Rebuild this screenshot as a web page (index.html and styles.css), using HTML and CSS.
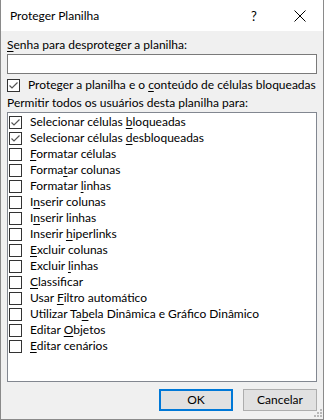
FILE: index.html
```html
<!DOCTYPE html>
<html lang="pt-BR">
<head>
  <meta charset="UTF-8">
  <title>Proteger Planilha</title>
  <link rel="stylesheet" href="styles.css">
</head>
<body>
  <div class="window">
    <div class="title-bar">
      <span class="title">Proteger Planilha</span>
      <span class="title-help">?</span>
      <span class="title-close">
        <svg width="12" height="12" viewBox="0 0 12 12"><path d="M0.5 0.5 L11.5 11.5 M11.5 0.5 L0.5 11.5" stroke="#000" stroke-width="1" fill="none"/></svg>
      </span>
    </div>

    <div class="content">
      <div class="label"><u>S</u>enha para desproteger a planilha:</div>
      <div class="input"></div>

      <div class="check-row protect">
        <span class="box checked"></span>
        <span>Proteger a planilha e o <u>c</u>onteúdo de células bloqueadas</span>
      </div>

      <div class="label allow">Permitir todos os usuários desta planilha para:</div>

      <div class="list">
        <div class="check-row"><span class="box checked"></span><span>Selecionar células <u>b</u>loqueadas</span></div>
        <div class="check-row"><span class="box checked"></span><span>Selecionar células <u>d</u>esbloqueadas</span></div>
        <div class="check-row"><span class="box"></span><span><u>F</u>ormatar células</span></div>
        <div class="check-row"><span class="box"></span><span>Forma<u>t</u>ar colunas</span></div>
        <div class="check-row"><span class="box"></span><span>Formatar <u>l</u>inhas</span></div>
        <div class="check-row"><span class="box"></span><span>I<u>n</u>serir colunas</span></div>
        <div class="check-row"><span class="box"></span><span>I<u>n</u>serir linhas</span></div>
        <div class="check-row"><span class="box"></span><span>Inserir <u>h</u>iperlinks</span></div>
        <div class="check-row"><span class="box"></span><span><u>E</u>xcluir colunas</span></div>
        <div class="check-row"><span class="box"></span><span>Excluir <u>l</u>inhas</span></div>
        <div class="check-row"><span class="box"></span><span><u>C</u>lassificar</span></div>
        <div class="check-row"><span class="box"></span><span>Usar <u>F</u>iltro automático</span></div>
        <div class="check-row"><span class="box"></span><span>Utilizar Ta<u>b</u>ela Dinâmica e Gráfico Dinâmico</span></div>
        <div class="check-row"><span class="box"></span><span>Editar <u>O</u>bjetos</span></div>
        <div class="check-row"><span class="box"></span><span><u>E</u>ditar cenários</span></div>
      </div>

      <div class="buttons">
        <span class="button default">OK</span>
        <span class="button">Cancelar</span>
      </div>
    </div>

    <svg class="grip" width="8" height="8" viewBox="0 0 8 8">
      <rect x="6" y="0" width="2" height="2" fill="#b8b8b8"/>
      <rect x="3" y="3" width="2" height="2" fill="#b8b8b8"/>
      <rect x="6" y="3" width="2" height="2" fill="#b8b8b8"/>
      <rect x="0" y="6" width="2" height="2" fill="#b8b8b8"/>
      <rect x="3" y="6" width="2" height="2" fill="#b8b8b8"/>
      <rect x="6" y="6" width="2" height="2" fill="#b8b8b8"/>
    </svg>
  </div>
</body>
</html>
```

FILE: styles.css
```css
html, body {
  margin: 0;
  padding: 0;
}
body {
  font-family: Lato, "Noto Sans", sans-serif;
  font-size: 12px;
  line-height: 16px;
  color: #000;
  background: #fff;
}
u {
  text-decoration-thickness: 1px;
  text-underline-offset: 2px;
}
.window {
  position: relative;
  box-sizing: border-box;
  width: 324px;
  height: 420px;
  border: 1px solid #8a8a8a;
  border-top: none;
  background: #f0f0f0;
  display: flex;
  flex-direction: column;
}
.title-bar {
  height: 31px;
  background: #fff;
  display: flex;
  align-items: center;
  padding-left: 9px;
}
.title {
  flex: 1;
}
.title-help {
  width: 46px;
  text-align: center;
  font-size: 13px;
}
.title-close {
  width: 46px;
  display: flex;
  justify-content: center;
  align-items: center;
}
.content {
  flex: 1;
  display: flex;
  flex-direction: column;
  padding: 6px 6px 0;
}
.label {
  height: 16px;
}
.input {
  margin-top: 1px;
  height: 18px;
  background: #fff;
  border: 1px solid #7a7a7a;
}
.check-row {
  display: flex;
  align-items: center;
  height: 16px;
  gap: 8px;
  white-space: nowrap;
}
.protect {
  margin-top: 3px;
}
.allow {
  margin-top: 2px;
}
.box {
  box-sizing: border-box;
  flex: none;
  width: 13px;
  height: 13px;
  border: 1px solid #333;
  background: #fff;
}
.box.checked {
  background: #fff url("data:image/svg+xml,%3Csvg xmlns='http://www.w3.org/2000/svg' width='11' height='11' viewBox='0 0 11 11'%3E%3Cpath d='M1.5 5.5 L4 8 L9.5 2.5' stroke='%23555' stroke-width='1.2' fill='none'/%3E%3C/svg%3E") no-repeat center;
}
.list {
  box-sizing: border-box;
  height: 270px;
  margin-top: 1px;
  padding: 1px 1px;
  background: #fff;
  border: 1px solid #828790;
}
.buttons {
  display: flex;
  justify-content: flex-end;
  gap: 10px;
  margin-top: 7px;
}
.button {
  box-sizing: border-box;
  width: 74px;
  height: 22px;
  display: flex;
  align-items: center;
  justify-content: center;
  background: #e1e1e1;
  border: 1px solid #adadad;
}
.button.default {
  border: 2px solid #0078d7;
}
.grip {
  position: absolute;
  right: 1px;
  bottom: 2px;
}
```
